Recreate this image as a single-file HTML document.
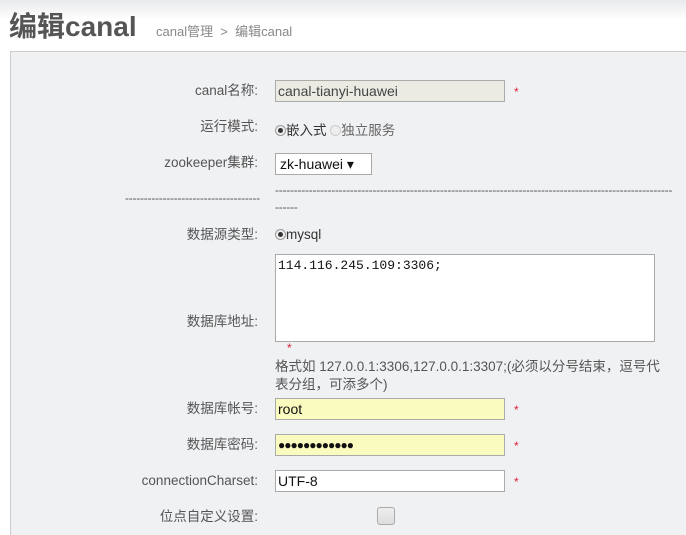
<!DOCTYPE html><html style="overflow:hidden"><head><meta charset="utf-8"><style>
html,body{margin:0;width:686px;height:535px;overflow:hidden}
body{background:linear-gradient(#e9eaec,#fff 20px,#fff 50px);font-family:"Liberation Sans","Noto Sans CJK SC",sans-serif;position:relative;color:#555}
.a{position:absolute;white-space:nowrap}
.panel{position:absolute;left:10px;top:51px;width:690px;height:490px;background:#f0f1f3;border:1px solid #ccc}
.l{position:absolute;right:428px;font-size:13.5px;color:#555;line-height:16px;white-space:nowrap}
.in{position:absolute;left:275px;width:226px;height:20px;border:1px solid #aaa;background:#fff;font-size:14px;color:#111;line-height:20px;padding-left:2px;box-sizing:content-box}
.st{position:absolute;left:514px;color:#e0203a;font-size:12px}
.r{display:inline-block;width:11px;height:11px;border:1px solid #999;border-radius:50%;background:#eee;vertical-align:-1px;box-sizing:border-box;position:relative}
.r.on::after{content:"";position:absolute;left:2px;top:2px;width:5px;height:5px;border-radius:50%;background:#333}
</style></head><body>
<div class="a" style="left:9px;top:5px;font-size:28px;font-weight:bold;color:#555;">编辑canal</div>
<div class="a" style="left:156px;top:21px;font-size:13px;color:#888">canal管理 &nbsp;&gt; &nbsp;编辑canal</div>
<div class="panel"></div>
<div class="l" style="top:83px">canal名称:</div>
<div class="in" style="top:80px;background:#ebebe4;color:#444">canal-tianyi-huawei</div><div class="st" style="top:85px">*</div>
<div class="l" style="top:119px">运行模式:</div>
<div class="a" style="left:275px;top:119px;font-size:13.5px;color:#333"><span class="r on"></span>嵌入式 <span class="r" style="border-color:#ccc"></span><span style="color:#666">独立服务</span></div>
<div class="l" style="top:155px">zookeeper集群:</div>
<div class="a" style="left:275px;top:153px;border:1px solid #aaa;background:#fff;font-size:14px;color:#111;line-height:20px;padding-left:4px;box-sizing:border-box;width:97px;height:22px">zk-huawei ▾</div>
<div class="a" style="left:125px;top:191px;font-size:12px;color:#555;letter-spacing:-0.25px">------------------------------------</div>
<div class="a" style="left:275px;top:182px;font-size:12px;color:#555;letter-spacing:-0.25px;line-height:17px">----------------------------------------------------------------------------------------------------------<br>------</div>
<div class="l" style="top:227px">数据源类型:</div>
<div class="a" style="left:275px;top:227px;font-size:13.5px;color:#333"><span class="r on"></span>mysql</div>
<div class="a" style="left:275px;top:254px;width:380px;height:88px;border:1px solid #aaa;background:#fff;box-sizing:border-box;font-family:'Liberation Mono',monospace;font-size:13px;color:#111;padding:3px 2px">114.116.245.109:3306;</div>
<div class="l" style="top:314px">数据库地址:</div>
<div class="a" style="left:287px;top:341px;color:#e0203a;font-size:12px">*</div>
<div class="a" style="left:275px;top:358px;font-size:13.5px;line-height:18px;color:#555">格式如 127.0.0.1:3306,127.0.0.1:3307;(必须以分号结束，逗号代<br>表分组，可添多个)</div>
<div class="l" style="top:401px">数据库帐号:</div>
<div class="in" style="top:398px;background:#fafcbf">root</div><div class="st" style="top:403px">*</div>
<div class="l" style="top:437px">数据库密码:</div>
<div class="in" style="top:434px;background:#fafcbf;font-size:12px;letter-spacing:-1px">●●●●●●●●●●●●</div><div class="st" style="top:439px">*</div>
<div class="l" style="top:473px">connectionCharset:</div>
<div class="in" style="top:470px">UTF-8</div><div class="st" style="top:475px">*</div>
<div class="l" style="top:509px">位点自定义设置:</div>
<div class="a" style="left:377px;top:507px;width:18px;height:18px;border:1px solid #aaa;border-radius:3px;background:linear-gradient(#eee,#ddd);box-sizing:border-box"></div>
</body></html>
